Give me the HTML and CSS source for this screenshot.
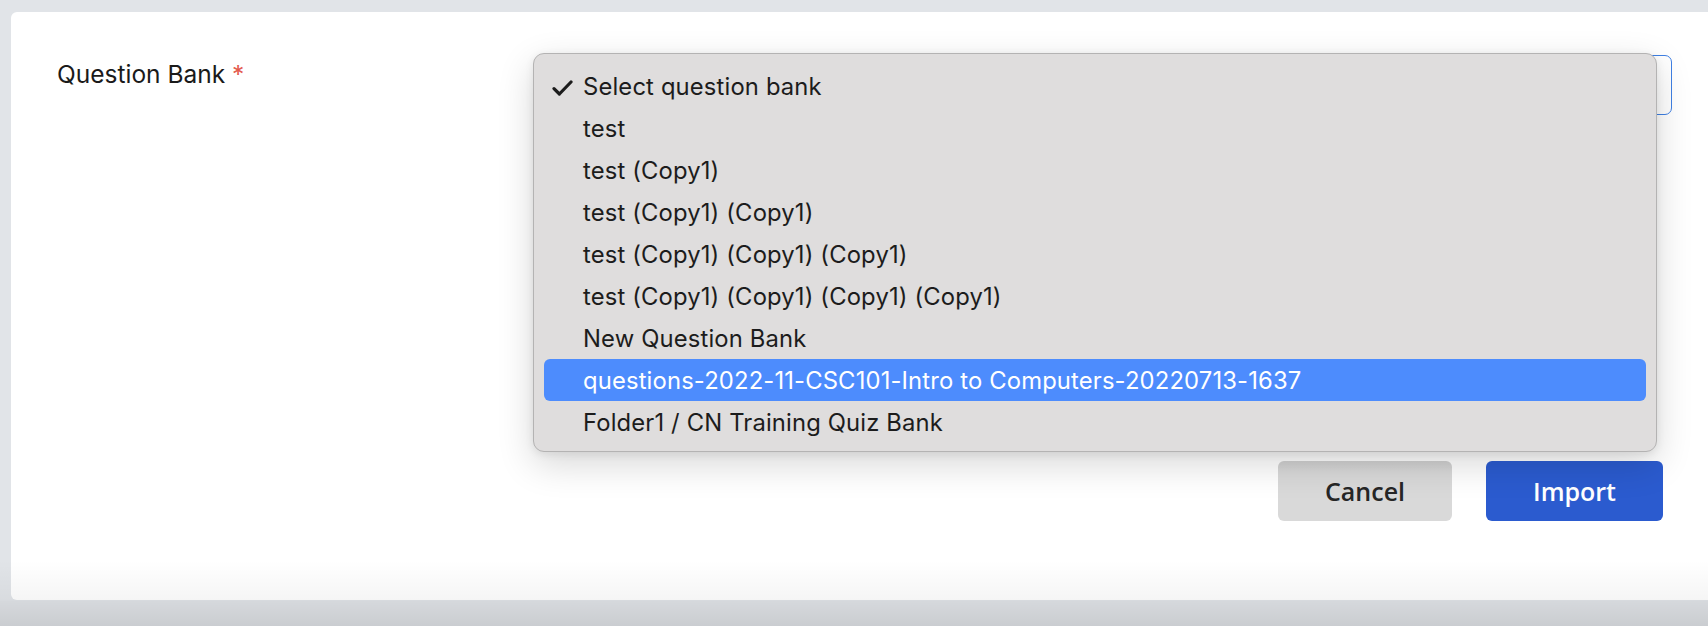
FILE: index.html
```html
<!DOCTYPE html>
<html lang="en">
<head>
<meta charset="utf-8">
<title>Import Question Bank</title>
<link rel="stylesheet" href="styles.css">
</head>
<body>
<div class="card">
  <div class="form-row">
    <label class="field-label">Question Bank <span class="req">*</span></label>
    <div class="field">
      <div class="select-box"></div>
      <div class="menu">
        <div class="item selected"><span class="check"><svg width="21" height="16" viewBox="0 0 21 16"><path d="M2 8.6 L7.4 14 L19 2" fill="none" stroke="#1c1c1c" stroke-width="3.2" stroke-linecap="round" stroke-linejoin="round"/></svg></span><span class="txt">Select question bank</span></div>
        <div class="item"><span class="check"></span><span class="txt">test</span></div>
        <div class="item"><span class="check"></span><span class="txt">test (Copy1)</span></div>
        <div class="item"><span class="check"></span><span class="txt">test (Copy1) (Copy1)</span></div>
        <div class="item"><span class="check"></span><span class="txt">test (Copy1) (Copy1) (Copy1)</span></div>
        <div class="item"><span class="check"></span><span class="txt">test (Copy1) (Copy1) (Copy1) (Copy1)</span></div>
        <div class="item"><span class="check"></span><span class="txt">New Question Bank</span></div>
        <div class="item active"><span class="check"></span><span class="txt">questions-2022-11-CSC101-Intro to Computers-20220713-1637</span></div>
        <div class="item"><span class="check"></span><span class="txt">Folder1 / CN Training Quiz Bank</span></div>
      </div>
    </div>
  </div>
  <div class="actions">
    <button class="btn cancel">Cancel</button>
    <button class="btn import">Import</button>
  </div>
</div>
<div class="fade"></div>
</body>
</html>
```

FILE: styles.css
```css
html, body {
  margin: 0;
  padding: 0;
  height: 626px;
  overflow: hidden;
}
body {
  background: #e1e4e8;
  position: relative;
  font-family: Inter, "Liberation Sans", sans-serif;
}
.card {
  margin: 12px 0 0 11px;
  background: #ffffff;
  border-radius: 6px 0 0 6px;
  padding: 43px 36px 79px 46px;
  box-sizing: border-box;
  height: 588px;
}
.form-row {
  display: flex;
  align-items: flex-start;
}
.field-label {
  width: 480px;
  flex: none;
  padding-top: 4px;
  font-size: 24.5px;
  line-height: 30px;
  color: #1a1a1a;
  letter-spacing: 0;
}
.req {
  color: #e35a4e;
}
.field {
  flex: 1;
  position: relative;
}
.select-box {
  height: 60px;
  box-sizing: border-box;
  border: 1.5px solid #3f80e4;
  border-radius: 7px;
  background: #fff;
}
.menu {
  position: absolute;
  left: -4px;
  top: -2px;
  width: 1124px;
  height: 399px;
  box-sizing: border-box;
  padding: 11px 10px 10px 10px;
  background: #dfdddd;
  border: 1px solid #b4b3b3;
  border-radius: 11px;
  box-shadow: 0 12px 36px rgba(0, 0, 0, 0.16), 0 2px 8px rgba(0, 0, 0, 0.08);
}
.item {
  height: 42px;
  display: flex;
  align-items: center;
  border-radius: 6px;
  font-size: 23.8px;
  color: #1c1c1c;
  letter-spacing: 0.15px;
}
.check {
  width: 39px;
  flex: none;
  display: flex;
  align-items: center;
  padding-left: 8px;
  box-sizing: border-box;
  padding-top: 3px;
}
.item.active {
  background: #4d8cfd;
  color: #ffffff;
}
.actions {
  display: flex;
  justify-content: flex-end;
  gap: 34px;
  margin-top: 346px;
  margin-right: 9px;
}
.btn {
  height: 60px;
  border: none;
  border-radius: 6px;
  font-family: "Open Sans", "Liberation Sans", sans-serif;
  font-weight: 600;
  font-size: 25px;
  padding: 0;
}
.cancel {
  width: 174px;
  background: linear-gradient(to bottom, #cfcfcf 0, #d9d9d9 12px, #d9d9d9 100%);
  color: #262626;
}
.import {
  width: 177px;
  background: #2b5bcf;
  color: #ffffff;
}
.fade {
  position: absolute;
  left: 0;
  right: 0;
  bottom: 0;
  height: 66px;
  background: linear-gradient(to bottom, rgba(0, 0, 0, 0) 0, rgba(0, 0, 0, 0.04) 40px, rgba(0, 0, 0, 0.05) 41px, rgba(0, 0, 0, 0.1) 100%);
  pointer-events: none;
}
```
